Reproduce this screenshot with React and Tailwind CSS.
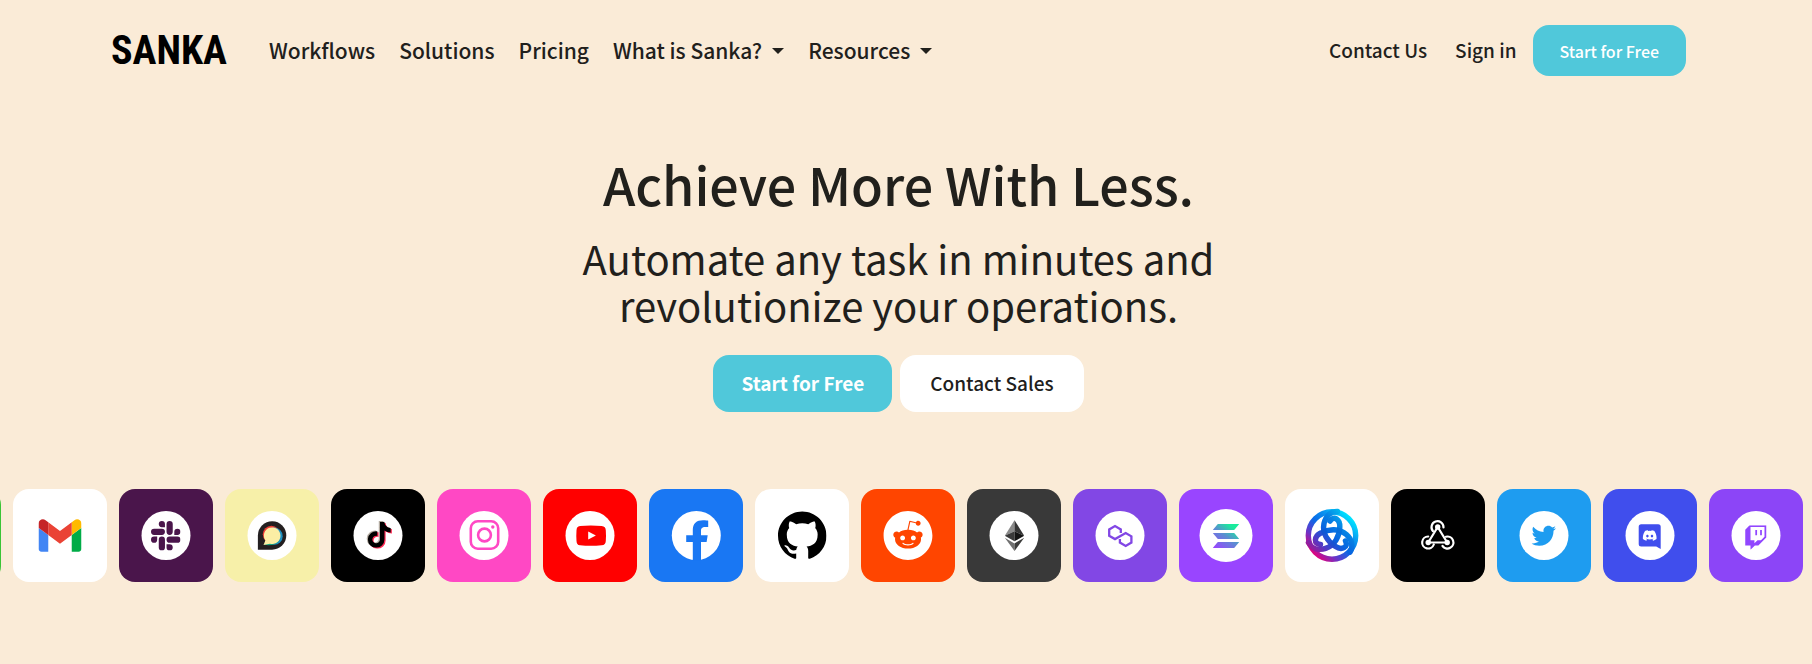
import { FaReddit, FaTiktok, FaTwitter, FaDiscord } from 'react-icons/fa'
import { SiGithub, SiSlack, SiTwitch } from 'react-icons/si'

const navItems = [
  { label: 'Workflows', href: '#workflows' },
  { label: 'Solutions', href: '#solutions' },
  { label: 'Pricing', href: '#pricing' },
  { label: 'What is Sanka?', menu: true },
  { label: 'Resources', menu: true }
]

const Caret = () => (
  <svg viewBox="0 0 12 6" className="w-3 h-[6px]" fill="currentColor" aria-hidden="true">
    <path d="M0 0h12L6 6z" />
  </svg>
)

const Header = () => (
  <header className="flex items-center justify-between pt-[25px]">
    <div className="flex items-center gap-[42px]">
      <a
        href="#home"
        className="font-['Roboto_Condensed','Liberation_Sans_Narrow',sans-serif] text-[40px] leading-none font-bold text-black"
      >
        SANKA
      </a>
      <nav>
        <ul className="flex items-center gap-6 text-[21px] font-medium">
          {navItems.map((item) => (
            <li key={item.label}>
              {item.menu ? (
                <button type="button" className="flex items-center gap-[10px]">
                  {item.label}
                  <Caret />
                </button>
              ) : (
                <a href={item.href}>{item.label}</a>
              )}
            </li>
          ))}
        </ul>
      </nav>
    </div>
    <div className="flex items-center text-[19px] font-medium">
      <a href="#contact" className="mr-7">Contact Us</a>
      <a href="#signin" className="mr-4">Sign in</a>
      <button type="button" className="h-[51px] px-[27px] rounded-2xl bg-[#50c8da] text-white text-base">
        Start for Free
      </button>
    </div>
  </header>
)

const Hero = () => (
  <section className="flex flex-col items-center text-center pt-[75px]">
    <h1 className="text-[52px] leading-[66px] font-medium">Achieve More With Less.</h1>
    <p className="mt-[18px] text-[40px] leading-[47px] max-w-[680px]">
      Automate any task in minutes and revolutionize your operations.
    </p>
    <div className="flex gap-2 mt-[26px] text-[19px]">
      <button type="button" className="h-[57px] px-7 rounded-2xl bg-[#50c8da] text-white font-bold">
        Start for Free
      </button>
      <button type="button" className="h-[57px] px-[30px] rounded-2xl bg-white font-medium">
        Contact Sales
      </button>
    </div>
  </section>
)

// Every logo is drawn on the same 93 x 93 grid as its tile
const Logo = ({ children }) => (
  <svg viewBox="0 0 93 93" className="w-full h-full" aria-hidden="true">
    {children}
  </svg>
)

const Disc = ({ r = 24.5 }) => <circle cx="46.5" cy="46.5" r={r} fill="#fff" />

const Gmail = () => (
  <Logo>
    <svg x="25" y="30" width="43" height="33" viewBox="52 42 88 66">
      <path fill="#4285f4" d="M58 108h14V74L52 59v43c0 3.32 2.69 6 6 6" />
      <path fill="#00ac47" d="M120 108h14c3.32 0 6-2.69 6-6V59l-20 15" />
      <path fill="#ffba00" d="M120 48v26l20-15v-8c0-7.42-8.47-11.65-14.4-7.2" />
      <path fill="#ea4335" d="M72 74V48l24 18 24-18v26L96 92" />
      <path fill="#c52528" d="M52 51v8l20 15V48l-5.6-4.2c-5.94-4.45-14.4-.22-14.4 7.2" />
    </svg>
  </Logo>
)

const Slack = () => (
  <Logo>
    <Disc />
    <SiSlack x="31.5" y="32" size={29.5} color="#4a154b" />
  </Logo>
)

const Bubble = () => (
  <Logo>
    <Disc />
    <path fill="#231f20" d="M32.4 60.7V46.2a14.2 14.2 0 1 1 14.2 14.5z" />
    <circle cx="45.9" cy="45.3" r="8.6" fill="#ef3e36" />
    <circle cx="48.6" cy="47.2" r="8.6" fill="#1c8fc1" />
    <path fill="#12a27c" d="M38.5 55.6c5 1.4 11.5.4 15-3.4l-6-6z" />
    <path fill="#fbeea4" d="M38 56l1.9-4.5a8.3 8.3 0 1 1 4.6 3.2z" />
  </Logo>
)

const Tiktok = () => (
  <Logo>
    <Disc />
    <FaTiktok x="33.6" y="32" size={26} color="#b5ada3" />
    <FaTiktok x="36" y="33.8" size={26} color="#fe2c55" />
    <FaTiktok x="34.8" y="32.8" size={26} color="#000" />
  </Logo>
)

const Instagram = () => (
  <Logo>
    <Disc />
    <g fill="none" stroke="#ff48c4" strokeWidth="2.6">
      <rect x="33.3" y="32.3" width="27.4" height="27.4" rx="7" />
      <circle cx="47" cy="46" r="6.4" />
    </g>
    <circle cx="55.3" cy="38" r="1.7" fill="#ff48c4" />
  </Logo>
)

const Youtube = () => (
  <Logo>
    <Disc />
    <path
      fill="#f00"
      d="M36.5 36.9q10.8-1 21.6 0c3 .3 4 1.5 4.2 4.3q.4 5.4 0 10.8c-.2 2.8-1.2 4-4.2 4.3q-10.8 1-21.6 0c-2.5-.3-3.3-1.5-3.5-4.3q-.4-5.4 0-10.8c.2-2.8 1-4 3.5-4.3z"
    />
    <path fill="#fff" d="M44.7 42.5v8l7.7-4z" />
  </Logo>
)

const Facebook = () => (
  <Logo>
    <circle cx="46.8" cy="46.5" r="24.5" fill="#fff" />
    <path
      fill="#1977f3"
      d="M43.3 71.5V53h-6.6v-6.7h6.6V41c0-6.5 3.7-9.7 10.2-9.7 2.5 0 5.2.4 5.2.4V38h-3c-3.2 0-4.2 1.7-4.2 3.8v4.5h6.7L57.1 53h-5.6v18.5z"
    />
  </Logo>
)

const Github = () => (
  <Logo>
    <SiGithub x="22.5" y="22" size={48.5} color="#000" />
  </Logo>
)

const Reddit = () => (
  <Logo>
    <FaReddit x="21.3" y="21.3" size={50.4} color="#fff" />
  </Logo>
)

const Ethereum = () => (
  <Logo>
    <Disc />
    <path fill="#8a8a8a" d="M47 31.2 37.3 46.7 47 42.3z" />
    <path fill="#343434" d="M47 31.2l9.7 15.5L47 42.3z" />
    <path fill="#393939" d="M47 42.3l-9.7 4.4L47 52.3z" />
    <path fill="#141414" d="M47 42.3l9.7 4.4L47 52.3z" />
    <path fill="#707070" d="M37.3 48.7 47 54.4V62z" />
    <path fill="#3c3c3b" d="M56.7 48.7 47 54.4V62z" />
  </Logo>
)

const Polygon = () => (
  <Logo>
    <Disc />
    <path
      fill="none"
      stroke="#8247e5"
      strokeWidth="2.3"
      d="M47.3 44v-3.6l-5.8-3.3-5.8 3.3v6.4l5.8 3.3L52.2 44l5.7 3.3v6.3l-5.7 3.3-5.8-3.3V50"
    />
  </Logo>
)

const Solana = () => (
  <Logo>
    <Disc r={26.5} />
    <defs>
      <linearGradient id="solana" gradientUnits="userSpaceOnUse" x1="37" y1="60" x2="56" y2="34">
        <stop offset="0" stopColor="#9945ff" />
        <stop offset=".5" stopColor="#5a8fd0" />
        <stop offset=".85" stopColor="#19ec9c" />
      </linearGradient>
    </defs>
    <g fill="url(#solana)">
      <path d="M38.3 35h21.4l-5 5.9H33.3z" />
      <path d="M33.3 44h21.4l5 5.9H38.3z" />
      <path d="M38.3 53h21.4l-5 5.9H33.3z" />
    </g>
  </Logo>
)

const astarBand = 'M60 52C63.5 58.5 56 61.5 50 57.5 42 52.5 36.5 44 38.5 34.5 40 27.5 44.5 22.5 52 22.5'

const Astar = () => (
  <Logo>
    <defs>
      <linearGradient id="astar" gradientUnits="userSpaceOnUse" x1="28" y1="66" x2="64" y2="28">
        <stop offset="0" stopColor="#e6007a" />
        <stop offset=".25" stopColor="#6a35c8" />
        <stop offset=".5" stopColor="#0a6ae8" />
        <stop offset=".75" stopColor="#0a96f0" />
        <stop offset="1" stopColor="#00e2ff" />
      </linearGradient>
      <mask id="astar-knot">
        <g fill="none" stroke="#fff" strokeWidth="5.4" strokeLinecap="round">
          <circle cx="46.5" cy="46.5" r="23.7" />
          <path d={astarBand} />
          <path d={astarBand} transform="rotate(120 46.5 46.5)" />
          <path d={astarBand} transform="rotate(240 46.5 46.5)" />
        </g>
      </mask>
    </defs>
    <rect width="93" height="93" fill="url(#astar)" mask="url(#astar-knot)" />
    <g fill="none" stroke="#0048c0" strokeOpacity=".22" strokeWidth="5.4" strokeLinecap="round">
      <path d={astarBand} />
      <path d={astarBand} transform="rotate(120 46.5 46.5)" />
      <path d={astarBand} transform="rotate(240 46.5 46.5)" />
    </g>
  </Logo>
)

const Webhook = () => (
  <Logo>
    <g fill="none" stroke="#fff" strokeWidth="2.2" strokeLinecap="round">
      <path d="M41.5 42.2A6 6 0 1 1 52 38.5" />
      <path d="M36.7 47.5A6 6 0 1 0 42.3 55.5" />
      <path d="M51 57A6 6 0 1 0 54.5 47.7" />
      <path d="M46.2 38 36.7 53.5M46.2 38l9.5 15.5M36.7 53.5h19" />
    </g>
    <g fill="#fff">
      <circle cx="46.2" cy="38" r="2.7" />
      <circle cx="36.7" cy="53.5" r="2.7" />
      <circle cx="55.7" cy="53.5" r="2.7" />
    </g>
  </Logo>
)

const Twitter = () => (
  <Logo>
    <Disc />
    <FaTwitter x="34" y="34.5" size={24.5} color="#1e9cf0" />
  </Logo>
)

const Discord = () => (
  <Logo>
    <Disc />
    <path
      fill="#404eed"
      d="M37.7 35.3h17a2.5 2.5 0 0 1 2.5 2.5V60l-4.5-2.5h-15a2.5 2.5 0 0 1-2.5-2.5V37.8a2.5 2.5 0 0 1 2.5-2.5z"
    />
    <FaDiscord x="38.7" y="39" size={15} color="#fff" />
  </Logo>
)

const Twitch = () => (
  <Logo>
    <Disc />
    <SiTwitch x="34" y="36.3" size={24.5} color="#9146ff" />
  </Logo>
)

const apps = [
  { name: 'LINE', bg: 'bg-[#3ac435]' },
  { name: 'Gmail', bg: 'bg-white', icon: Gmail },
  { name: 'Slack', bg: 'bg-[#4a154b]', icon: Slack },
  { name: 'Chat', bg: 'bg-[#f7f0a9]', icon: Bubble },
  { name: 'TikTok', bg: 'bg-black', icon: Tiktok },
  { name: 'Instagram', bg: 'bg-[#ff48c4]', icon: Instagram },
  { name: 'YouTube', bg: 'bg-[#ff0000]', icon: Youtube },
  { name: 'Facebook', bg: 'bg-[#1977f3]', icon: Facebook },
  { name: 'GitHub', bg: 'bg-white', icon: Github },
  { name: 'Reddit', bg: 'bg-[#ff4500]', icon: Reddit },
  { name: 'Ethereum', bg: 'bg-[#393939]', icon: Ethereum },
  { name: 'Polygon', bg: 'bg-[#8247e5]', icon: Polygon },
  { name: 'Solana', bg: 'bg-[#9945ff]', icon: Solana },
  { name: 'Astar', bg: 'bg-white', icon: Astar },
  { name: 'Webhook', bg: 'bg-black', icon: Webhook },
  { name: 'Twitter', bg: 'bg-[#1e9cf0]', icon: Twitter },
  { name: 'Discord', bg: 'bg-[#404eed]', icon: Discord },
  { name: 'Twitch', bg: 'bg-[#8c45f7]', icon: Twitch }
]

const AppStrip = () => (
  <section className="mt-[77px] overflow-hidden">
    <ul className="flex gap-3 -ml-[93px]">
      {apps.map((app) => {
        const Icon = app.icon
        return (
          <li
            key={app.name}
            aria-label={app.name}
            className={`w-[94px] h-[93px] shrink-0 rounded-2xl overflow-hidden ${app.bg}`}
          >
            {Icon && <Icon />}
          </li>
        )
      })}
    </ul>
  </section>
)

const App = () => {
  return (
    <div className="min-h-screen pb-20 bg-[#faebd7] text-[#21201c] font-['Noto_Sans_CJK_JP',sans-serif]">
      <div className="pl-[111px] pr-[126px]">
        <Header />
        <Hero />
      </div>
      <AppStrip />
    </div>
  )
}

export default App
